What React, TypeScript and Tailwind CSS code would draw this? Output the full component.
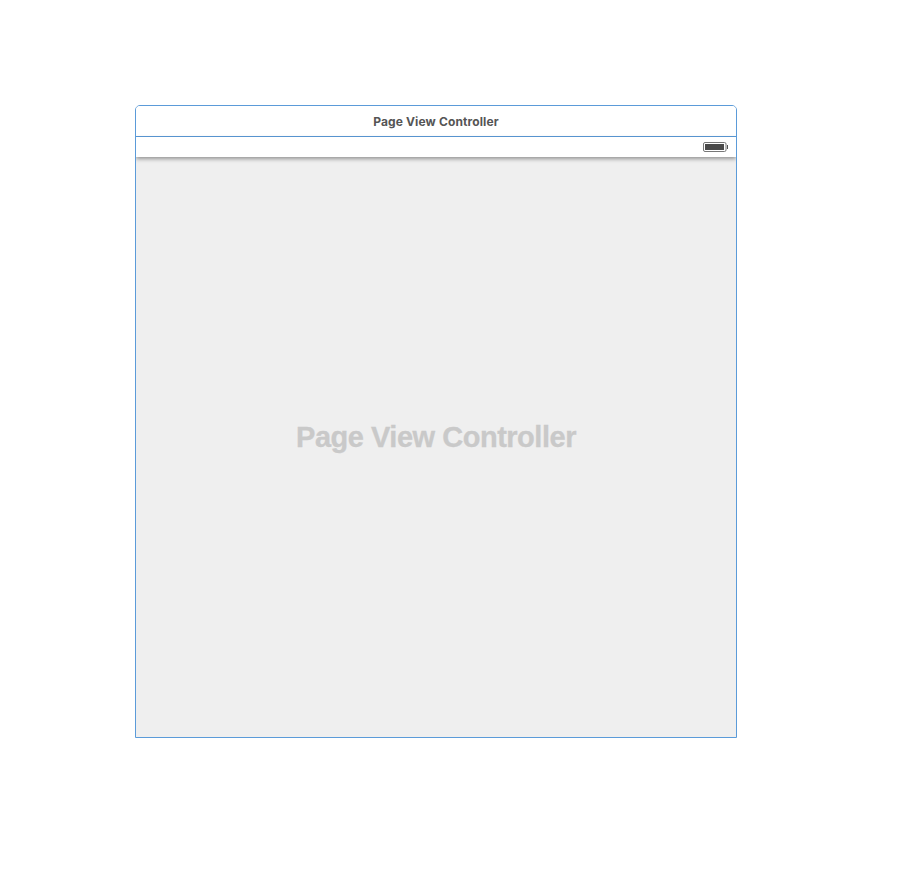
export default function App() {
  return (
    <main className="h-[870px] w-[900px] overflow-hidden bg-white pt-[105px] pl-[135px]">
      <section className="flex h-[633px] w-[602px] flex-col overflow-hidden rounded-t-[5px] border border-[#5b9bd9] bg-[#efefef]">
        <header className="flex h-[31px] shrink-0 items-center justify-center border-b border-[#5b9bd9] bg-white pt-[2px]">
          <h1 className="font-['Inter',sans-serif] text-[12px] font-bold tracking-[0.13px] whitespace-nowrap text-[#555555]">Page View Controller</h1>
        </header>
        <div className="flex h-5 shrink-0 items-center justify-end bg-white pr-2 shadow-[0_2px_4px_rgba(0,0,0,0.38)]">
          <svg width="25" height="10" viewBox="0 0 25 10" fill="none">
            <rect x="0.5" y="0.5" width="22.5" height="9" rx="1.5" stroke="#777777" />
            <rect x="2" y="2" width="19" height="6" fill="#4a4a4a" />
            <rect x="24" y="3" width="1" height="4" fill="#555555" />
          </svg>
        </div>
        <div className="flex flex-1 items-center justify-center pb-5">
          <p className="font-['Liberation_Sans',sans-serif] text-[29px] leading-none font-bold tracking-[-0.48px] whitespace-nowrap text-[#c9c9c9] [-webkit-text-stroke:0.3px_#c9c9c9]">Page View Controller</p>
        </div>
      </section>
    </main>
  );
}
